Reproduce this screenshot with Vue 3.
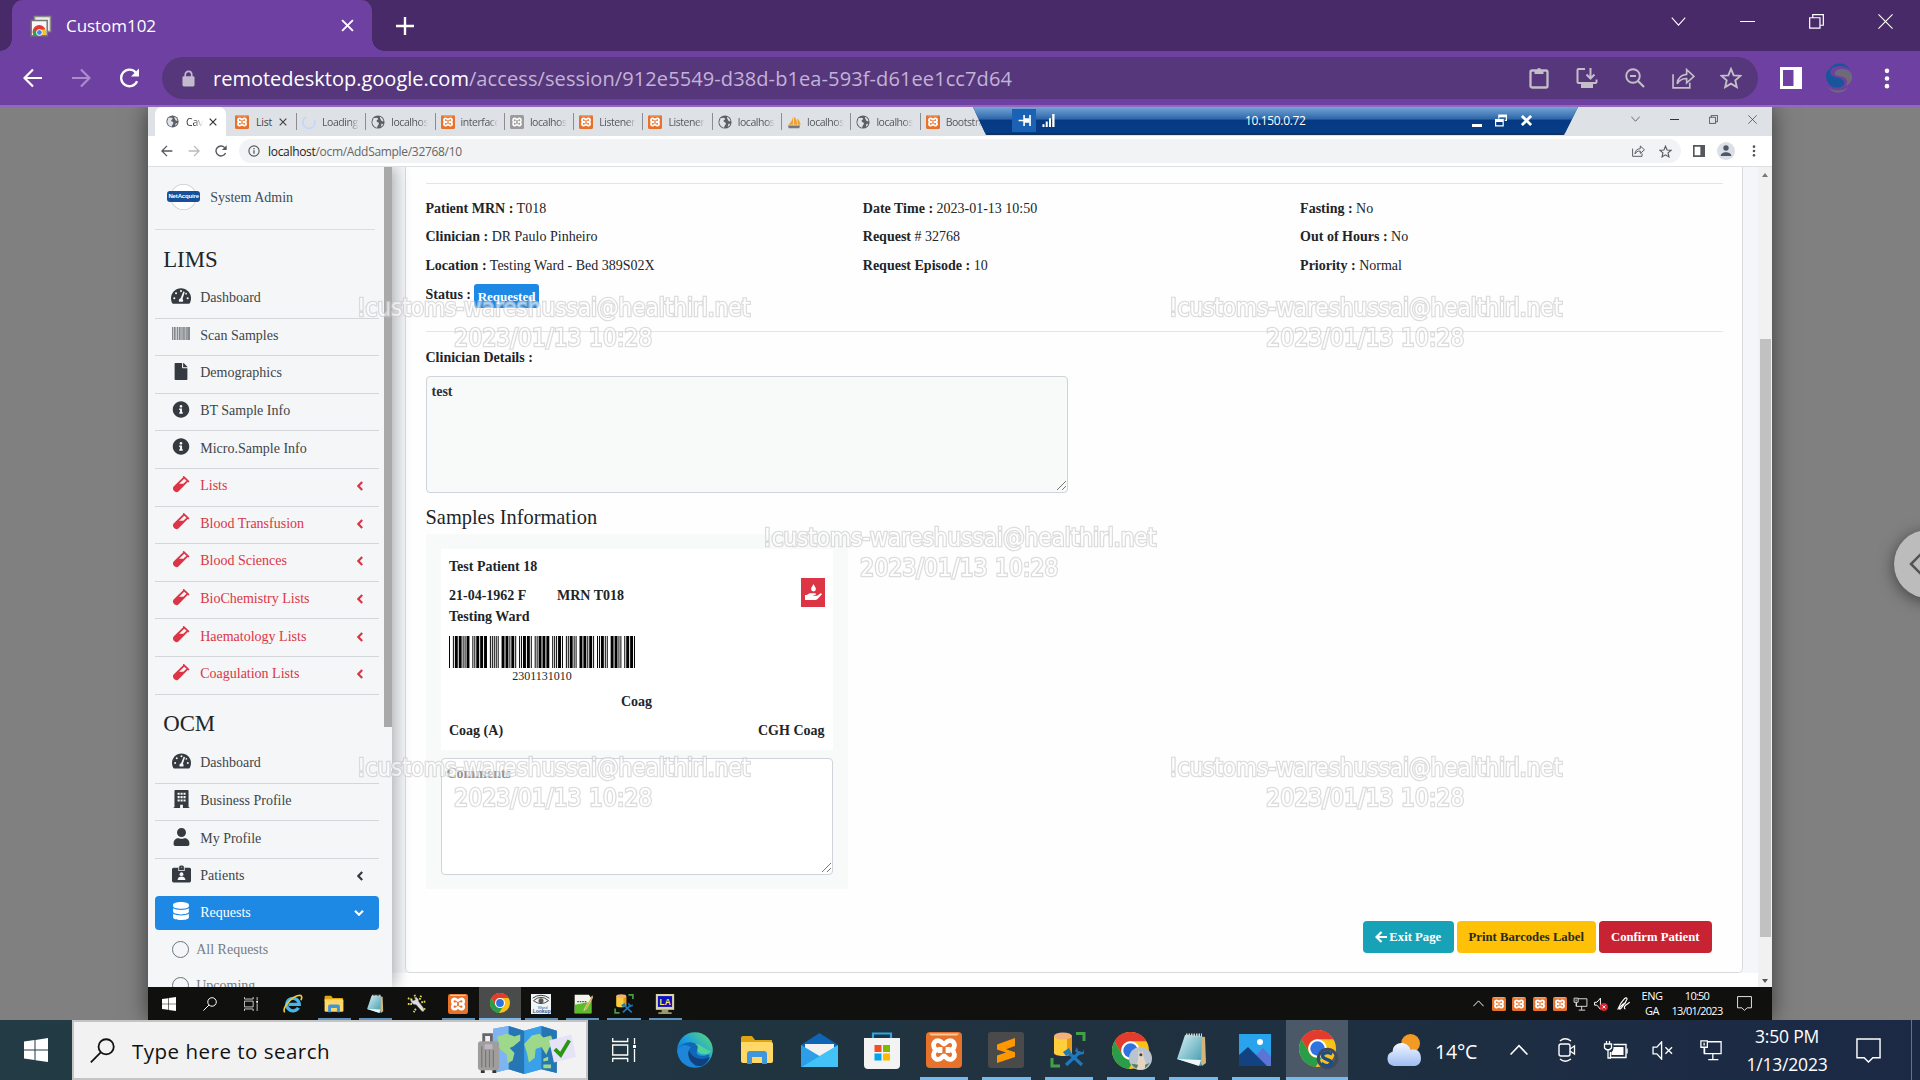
<script setup>
const tabs = [
  { icon: 'spin', text: 'Loading' },
  { icon: 'globe', text: 'localhost' },
  { icon: 'xampp', text: 'interface' },
  { icon: 'xamppgray', text: 'localhost' },
  { icon: 'xampp', text: 'Listener' },
  { icon: 'xampp', text: 'Listener' },
  { icon: 'globe', text: 'localhost' },
  { icon: 'pma', text: 'localhost' },
  { icon: 'globe', text: 'localhost' },
  { icon: 'xampp', text: 'Bootstrap' },
]
const lims = [
  { icon: 'tacho', text: 'Dashboard' },
  { icon: 'scan', text: 'Scan Samples' },
  { icon: 'file', text: 'Demographics' },
  { icon: 'info', text: 'BT Sample Info' },
  { icon: 'info', text: 'Micro.Sample Info' },
  { icon: 'vial', text: 'Lists', red: true },
  { icon: 'vial', text: 'Blood Transfusion', red: true },
  { icon: 'vial', text: 'Blood Sciences', red: true },
  { icon: 'vial', text: 'BioChemistry Lists', red: true },
  { icon: 'vial', text: 'Haematology Lists', red: true },
  { icon: 'vial', text: 'Coagulation Lists', red: true },
]
const ocm = [
  { icon: 'tacho', text: 'Dashboard' },
  { icon: 'building', text: 'Business Profile' },
  { icon: 'user', text: 'My Profile' },
  { icon: 'idbadge', text: 'Patients', arrow: true },
]
const columns = [
  [['Patient MRN :', 'T018'], ['Clinician :', 'DR Paulo Pinheiro'], ['Location :', 'Testing Ward - Bed 389S02X']],
  [['Date Time :', '2023-01-13 10:50'], ['Request', '# 32768'], ['Request Episode :', '10']],
  [['Fasting :', 'No'], ['Out of Hours :', 'No'], ['Priority :', 'Normal']],
]
const marks = [
  { x: 553, y: 294 }, { x: 1365, y: 294 }, { x: 959, y: 524 }, { x: 553, y: 754 }, { x: 1365, y: 754 },
]
const remoteApps = [
  { icon: 'ie' }, { icon: 'folder', open: true }, { icon: 'notepad', open: true }, { icon: 'wrench' },
  { icon: 'xampp', open: true }, { icon: 'chrome', active: true }, { icon: 'eye', open: true },
  { icon: 'npp', open: true }, { icon: 'dbtool', open: true }, { icon: 'la', open: true },
]
const hostApps = [
  { icon: 'edge', w: 36, h: 36 }, { icon: 'folder', w: 34, h: 34 }, { icon: 'mail', w: 37, h: 34 }, { icon: 'store', w: 36, h: 37 },
  { icon: 'xampp', w: 36, h: 36, open: true }, { icon: 'sublime', w: 36, h: 36, open: true },
  { icon: 'dbtool', w: 36, h: 36, open: true }, { icon: 'chrome', w: 37, h: 37, open: true, badge: 'pet' },
  { icon: 'notepad', w: 36, h: 36, open: true }, { icon: 'photos', w: 32, h: 32, open: true },
  { icon: 'chrome', w: 37, h: 37, active: true, badge: 'swirlbadge' },
]

// Code 39: alternating bar and space, w = wide
const code39 = { '*': 'nwnnwnwnn', 0: 'nnnwwnwnn', 1: 'wnnwnnnnw', 2: 'nnwwnnnnw', 3: 'wnwwnnnnn' }
const bars = []
let pos = 0
for (const ch of '*2301131010*') {
  code39[ch].split('').forEach((k, i) => {
    const w = k === 'w' ? 3 : 1
    if (i % 2 === 0) bars.push({ x: pos, w })
    pos += w
  })
  pos += 1
}
</script>

<template>
  <div class="screen">
    <svg width="0" height="0" class="defs">
      <defs>
        <linearGradient id="gEdge" x1="0" y1="1" x2="1" y2="0"><stop offset="0" stop-color="#0c59a4" /><stop offset=".5" stop-color="#1b9de2" /><stop offset="1" stop-color="#5fe06a" /></linearGradient>
        <linearGradient id="gPad" x1="0" y1="0" x2="1" y2="1"><stop offset="0" stop-color="#d9f1f5" /><stop offset="1" stop-color="#3b97ac" /></linearGradient>
        <linearGradient id="gCloud" x1="0" y1="0" x2="0" y2="1"><stop offset="0" stop-color="#f2f6ff" /><stop offset="1" stop-color="#9dbdf3" /></linearGradient>
        <symbol id="back" viewBox="0 0 20 20"><path d="M19 10H2M10 1.500L1.500 10l8.500 8.500" fill="none" stroke="currentColor" stroke-width="2.200" /></symbol>
        <symbol id="fwd" viewBox="0 0 20 20"><path d="M1 10h17M10 1.500l8.500 8.500-8.500 8.500" fill="none" stroke="currentColor" stroke-width="2.200" /></symbol>
        <symbol id="reload" viewBox="0 0 20 20"><path d="M17.600 13.200A8.300 8.300 0 1 1 16.200 4.400" fill="none" stroke="currentColor" stroke-width="2.300" /><path d="M19.500 .5v8h-8z" fill="currentColor" /></symbol>
        <symbol id="x" viewBox="0 0 12 12"><path d="M1 1l10 10M11 1L1 11" fill="none" stroke="currentColor" stroke-width="1.800" /></symbol>
        <symbol id="xthin" viewBox="0 0 16 16"><path d="M.5 .5l15 15M15.500 .5l-15 15" fill="none" stroke="currentColor" stroke-width="1.200" /></symbol>
        <symbol id="vee" viewBox="0 0 16 10"><path d="M.5 .8L8 9 15.500 .8" fill="none" stroke="currentColor" stroke-width="1.200" /></symbol>
        <symbol id="caret" viewBox="0 0 16 10"><path d="M.5 9L8 1.200 15.500 9" fill="none" stroke="currentColor" stroke-width="1.400" /></symbol>
        <symbol id="restore" viewBox="0 0 16 16"><path d="M.7 4h11v11h-11zM4 4V.7h11.300V12H12" fill="none" stroke="currentColor" stroke-width="1.300" /></symbol>
        <symbol id="lock" viewBox="0 0 14 18"><path d="M3.500 8V4.800a3.500 3.500 0 0 1 7 0V8" fill="none" stroke="currentColor" stroke-width="1.800" /><rect x=".5" y="6.500" width="13" height="11" rx="1.500" fill="currentColor" /></symbol>
        <symbol id="clip" viewBox="0 0 20 22"><rect x="1.500" y="3.500" width="17" height="17" rx="1.500" fill="none" stroke="currentColor" stroke-width="2.300" /><path d="M5.500 3h2.500a2 2 0 0 1 4 0h2.500v4h-9z" fill="currentColor" /></symbol>
        <symbol id="install" viewBox="0 0 22 22"><path d="M9 2H2.500a1 1 0 0 0-1 1v12a1 1 0 0 0 1 1h17a1 1 0 0 0 1-1v-2.500" fill="none" stroke="currentColor" stroke-width="2" /><path d="M14.500 1v10M10.500 7.500l4 4 4-4" fill="none" stroke="currentColor" stroke-width="2" /><path d="M5 17h12v4H5z" fill="currentColor" /></symbol>
        <symbol id="zoomout" viewBox="0 0 20 20"><circle cx="8" cy="8" r="6.800" fill="none" stroke="currentColor" stroke-width="1.900" /><path d="M13 13l6 6M5 8h6" stroke="currentColor" stroke-width="2.200" /></symbol>
        <symbol id="share" viewBox="0 0 22 20"><path d="M1 6v13h16v-5" fill="none" stroke="currentColor" stroke-width="1.600" /><path d="M5 15c.5-6 3.500-8.500 9-9V1.500L21 8l-7 6.200V10c-4.500 0-7 1.500-9 5z" fill="none" stroke="currentColor" stroke-width="1.600" /></symbol>
        <symbol id="star" viewBox="0 0 20 20"><path d="M10 1.800l2.400 5.800 6.200.5-4.700 4.100 1.400 6.100-5.300-3.200-5.300 3.200 1.400-6.100L1.400 8.100l6.200-.5z" fill="none" stroke="currentColor" stroke-width="1.700" /></symbol>
        <symbol id="panel" viewBox="0 0 22 22"><path fill-rule="evenodd" d="M0 0h22v22H0zM3 3v16h10.500V3z" fill="currentColor" /></symbol>
        <symbol id="dots" viewBox="0 0 6 22"><circle cx="3" cy="3" r="2.400" fill="currentColor" /><circle cx="3" cy="11" r="2.400" fill="currentColor" /><circle cx="3" cy="19" r="2.400" fill="currentColor" /></symbol>
        <symbol id="swirl" viewBox="0 0 30 30"><path d="M5 7a12 12 0 0 1 21-.5C20 1.500 11 2 5 7zM2 14C1 9 5 6 8 5.500 5 9 6 13 11 14c6 1.500 10 3 9 7-1 3-5 4-9 3.500C6 24 3 20 2 14z" fill="#17569a" /><path d="M28 15c1-6-5-9.500-11-9-5 .5-7 3-6 5.500C12 14 22 12 23 18c.3 2-.5 4-2 5 4-1 6.500-4 7-8zM4 24c6 5 15 4.500 20 0-4 7-15 8-20 0z" fill="#6d6b78" /></symbol>
        <symbol id="swirlbadge" viewBox="0 0 30 30"><circle cx="15" cy="15" r="12" fill="none" stroke="#3f4a5a" stroke-width="4" /><path d="M21 9c-8-4-14 0-12 4s12 3 11 8-9 4-13 0" fill="none" stroke="#1e4d84" stroke-width="4.500" /></symbol>
        <symbol id="pet" viewBox="0 0 30 30"><circle cx="15" cy="15" r="15" fill="#b9c4d0" /><path d="M12 4l3 4 3-3 1 8c2 5 4 9 4 14a15 15 0 0 1-14 1c0-6 3-9 3-14z" fill="#e3d6c4" /><circle cx="15.500" cy="10" r="2" fill="#4d4038" /><path d="M3 22a14 14 0 0 0 7 6l2-5zM27 21l-6 2v5z" fill="#567e4f" /></symbol>
        <symbol id="crd" viewBox="0 0 22 22"><path d="M4.500 1.500h16v15H4.500z" fill="#ececec" stroke="#8b8b8b" stroke-width="1.500" /><path d="M1.200 5.500h16v15.300h-16z" fill="#f7f7f7" stroke="#777" stroke-width="1.500" /><path d="M3 19a6.500 6.500 0 0 1 12.500-4.500l-6 .5z" fill="#e33b2e" /><path d="M3 20a7 7 0 0 1 1.500-5l4 5z" fill="#2a9d4b" /><path d="M11 15h4.700c.5 1.500.5 3.500 0 5h-5z" fill="#fbc116" /><circle cx="9.400" cy="17.500" r="2.900" fill="#4285f4" stroke="#fff" /></symbol>
        <symbol id="globe" viewBox="0 0 16 16"><circle cx="8" cy="8" r="7.500" fill="#5a6066" /><path d="M3 3.500c2 0 4-1 5 .5s-2 1.500-1.500 3S9.500 8 9 10s-2 2.500-2 4.500C4 14 1.500 11 1.500 8zM10.500 2c2 1 3.500 2.500 3.800 5-1.500.5-2.500 0-3-1.500s-1.500-2-.8-3.500zM12 10l2 .3c-.6 1.500-1.500 2.500-3 3z" fill="#dfe2e6" /></symbol>
        <symbol id="xampp" viewBox="0 0 36 36"><rect width="36" height="36" rx="4" fill="#e7722b" /><path d="M3 1.500h30l-2 2H5z" fill="#fbc79c" /><path d="M10 9c5-2 6 3 8 3s3-5 8-3c3.500 2 3 6.500 0 9 3 2.500 3.500 7 0 9-5 2-6-3-8-3s-3 5-8 3c-3.500-2-3-6.500 0-9-3-2.500-3.500-7 0-9zM14 15v6M22 15v6" fill="none" stroke="#fff" stroke-width="4.800" stroke-linejoin="round" /></symbol>
        <symbol id="xamppgray" viewBox="0 0 36 36"><rect width="36" height="36" rx="4" fill="#9b9b9b" /><path d="M10 9c5-2 6 3 8 3s3-5 8-3c3.500 2 3 6.500 0 9 3 2.500 3.500 7 0 9-5 2-6-3-8-3s-3 5-8 3c-3.500-2-3-6.500 0-9-3-2.500-3.500-7 0-9zM14 15v6M22 15v6" fill="none" stroke="#fff" stroke-width="4" /></symbol>
        <symbol id="spin" viewBox="0 0 16 16"><path d="M5 2A7 7 0 1 0 14.500 6" fill="none" stroke="#c3d8f8" stroke-width="2" /></symbol>
        <symbol id="pma" viewBox="0 0 16 16"><path d="M7 1v10H1.500C5 8 6.500 5 7 1zM8 2c3 2.500 3.500 5.500 3.500 9H8zM12 4c2 2 3 4 3.500 7H12z" fill="#f0a030" /><path d="M1 12h14l-1 3H2z" fill="#77777f" /></symbol>
        <symbol id="infoo" viewBox="0 0 16 16"><circle cx="8" cy="8" r="6.800" fill="none" stroke="currentColor" stroke-width="1.500" /><path d="M8 7v4.800M8 4v1.700" stroke="currentColor" stroke-width="1.700" /></symbol>
        <symbol id="pin" viewBox="0 0 14 12"><path d="M0 6h6M6 0v12M12.500 0v12" stroke="currentColor" stroke-width="1.800" /><path d="M6 3.500h6v5H6z" fill="currentColor" /></symbol>
        <symbol id="signal" viewBox="0 0 13 14"><path d="M0 11h2.200v3H0zM3.500 8h2.200v6H3.500zM7 4.500h2.200V14H7zM10.500 0H13v14h-2.500z" fill="currentColor" /></symbol>
        <symbol id="rdprest" viewBox="0 0 13 13"><path fill-rule="evenodd" d="M3.500 0H13v7h-2.500V5.700h1.300V3H4.700v1.500H3.500zM0 5h9.500v8H0zM1.300 8v3.700h6.900V8z" fill="currentColor" /></symbol>
        <symbol id="avatar" viewBox="0 0 18 18"><circle cx="9" cy="9" r="9" fill="#dce0e6" /><circle cx="9" cy="6" r="2.700" fill="#4d5968" /><path d="M3.700 14c0-5 10.600-5 10.600 0z" fill="#4d5968" /></symbol>
        <symbol id="tacho" viewBox="0 0 576 512"><path d="M288 32C129 32 0 161 0 320c0 53 14 102 39 145 6 10 16 15 27 15h444c11 0 21-5 27-15 25-43 39-92 39-145C576 161 447 32 288 32z" fill="currentColor" /><g fill="#f4f6f9"><circle cx="288" cy="115" r="30" /><circle cx="145" cy="175" r="30" /><circle cx="95" cy="320" r="30" /><circle cx="480" cy="320" r="30" /><circle cx="435" cy="190" r="26" /><path d="M355 125l42 14-66 200c18 14 25 40 15 80H230c-15-50 5-85 45-95z" /></g></symbol>
        <symbol id="scan" viewBox="0 0 18 13"><path d="M0 0h18v13H0z" fill="#c9cccf" /><path d="M0 0h1v13H0zM2 0h1.500v13H2zM5 0h1v13H5zM7 0h1.500v13H7zM9.500 0h1v13h-1zM11.200 0h1.500v13h-1.500zM13.700 0h1v13h-1zM15.300 0H18v13h-2.700z" fill="#85898d" /></symbol>
        <symbol id="file" viewBox="0 0 384 512"><path fill="currentColor" d="M224 136V0H24C10.700 0 0 10.700 0 24v464c0 13.300 10.700 24 24 24h336c13.300 0 24-10.700 24-24V160H248c-13.200 0-24-10.800-24-24zm160-14.100v6.100H256V0h6.100c6.400 0 12.500 2.500 17 7l97.900 98c4.500 4.500 7 10.600 7 16.900z" /></symbol>
        <symbol id="info" viewBox="0 0 512 512"><path fill="currentColor" d="M256 8C119.043 8 8 119.083 8 256c0 136.997 111.043 248 248 248s248-111.003 248-248C504 119.083 392.957 8 256 8zm0 110c23.196 0 42 18.804 42 42s-18.804 42-42 42-42-18.804-42-42 18.804-42 42-42zm56 254c0 6.627-5.373 12-12 12h-88c-6.627 0-12-5.373-12-12v-24c0-6.627 5.373-12 12-12h12v-64h-12c-6.627 0-12-5.373-12-12v-24c0-6.627 5.373-12 12-12h64c6.627 0 12 5.373 12 12v100h12c6.627 0 12 5.373 12 12v24z" /></symbol>
        <symbol id="vial" viewBox="0 0 16 16"><path fill-rule="evenodd" d="M9.800.3l1-.3L16 5l-.8 1-.9-.4-8.500 8.800C3 17-1.500 12.500 1.300 9.700L10 1.200zM11 2.600L6.200 7.400h4L13.200 4.500z" fill="currentColor" /></symbol>
        <symbol id="building" viewBox="0 0 448 512"><path fill-rule="evenodd" d="M0 512v-24h24V24Q24 0 48 0h352q24 0 24 24v464h24v24H264v-92h-80v92zM112 76v60h60V76zm84 0v60h60V76zm84 0v60h60V76zM112 172v60h60v-60zm84 0v60h60v-60zm84 0v60h60v-60zM112 268v60h60v-60zm168 0v60h60v-60zm-84 0v60h60v-60z" fill="currentColor" /></symbol>
        <symbol id="user" viewBox="0 0 448 512"><path fill="currentColor" d="M224 256c70.700 0 128-57.300 128-128S294.700 0 224 0 96 57.300 96 128s57.300 128 128 128zm89.600 32h-16.700c-22.200 10.200-46.900 16-72.900 16s-50.600-5.800-72.900-16h-16.700C60.200 288 0 348.200 0 422.400V464c0 26.500 21.500 48 48 48h352c26.500 0 48-21.500 48-48v-41.600c0-74.200-60.200-134.400-134.400-134.400z" /></symbol>
        <symbol id="idbadge" viewBox="0 0 576 512"><path d="M48 64h168V40q0-40 72-40t72 40v24h168q48 0 48 48v352q0 48-48 48H48q-48 0-48-48V112q0-48 48-48z" fill="currentColor" /><path d="M216 64v80h144V64h24v104H192V64z" fill="#f4f6f9" /><circle cx="288" cy="260" r="58" fill="#f4f6f9" /><path d="M170 440c0-140 236-140 236 0z" fill="#f4f6f9" /><circle cx="288" cy="60" r="22" fill="#8e959b" /></symbol>
        <symbol id="database" viewBox="0 0 448 512"><path fill="currentColor" d="M448 73.143v45.714C448 159.143 347.667 192 224 192S0 159.143 0 118.857V73.143C0 32.857 100.333 0 224 0s224 32.857 224 73.143zM448 176v102.857C448 319.143 347.667 352 224 352S0 319.143 0 278.857V176c48.125 33.143 136.208 48.572 224 48.572S399.874 209.143 448 176zm0 160v102.857C448 479.143 347.667 512 224 512S0 479.143 0 438.857V336c48.125 33.143 136.208 48.572 224 48.572S399.874 369.143 448 336z" /></symbol>
        <symbol id="angle" viewBox="0 0 6 10"><path d="M5.200 1L1.300 5l3.900 4" fill="none" stroke="currentColor" stroke-width="2.200" /></symbol>
        <symbol id="angled" viewBox="0 0 10 6"><path d="M1 .8l4 3.900L9 .8" fill="none" stroke="currentColor" stroke-width="2.200" /></symbol>
        <symbol id="drop" viewBox="0 0 17 16"><path d="M8.500 0c1 2.200 2.400 3.200 2.400 5a2.400 2.400 0 0 1-4.800 0c0-1.800 1.400-2.800 2.400-5zM0 11h2c2-2 4-1.700 6-1.700h2c1.300 0 1.200 1.700 0 1.700H8.500v.7h3.700l3-2.300c1.200-.7 2 .5 1.300 1.300L12.500 15c-.6.600-1.500 1-2.500 1H0z" fill="#fff" /></symbol>
        <symbol id="win" viewBox="0 0 24 24"><path d="M0 3.400L10.500 2v9.600H0zM11.500 1.900L24 0v11.600H11.500zM0 12.500h10.500V22L0 20.600zM11.500 12.500H24V24l-12.500-1.800z" fill="#fff" /></symbol>
        <symbol id="search" viewBox="0 0 24 24"><circle cx="15.500" cy="8.500" r="7.300" fill="none" stroke="currentColor" stroke-width="1.700" /><path d="M10.300 13.700L.8 23.300" stroke="currentColor" stroke-width="1.700" /></symbol>
        <symbol id="taskview" viewBox="0 0 24 24"><path d="M.7 0v3.500h15V0M.7 24v-3.500h15V24M.7 7h15v10h-15zM22.500 0v6M22.500 11v13" fill="none" stroke="#fff" stroke-width="1.300" /><path d="M21 7h3v3h-3z" fill="#fff" /></symbol>
        <symbol id="edge" viewBox="0 0 36 36"><circle cx="18" cy="18" r="17.800" fill="url(#gEdge)" /><path d="M.5 20C2 11 12 8 19 12c4 2.500 3 6 .5 8 0 4 6 5 12 2.500 1 0 1.500 1 .5 2.500-7 11-20 13-28 3-2-2-3-5-3.500-8z" fill="#1067b8" /><path d="M14 15c-5 5-2 15 6 20C8 37 0 27 .3 18 4 12 9 12 14 15z" fill="#1d86d8" /><path d="M12 18c-3 8 4 17 13 16 4-2 7-6 8-9-8 4-18 2-21-7z" fill="#123f7d" /><path d="M20 18c2-3 0-5-2-6 7 0 9 6 16 7-2 4-12 5-14-1z" fill="#52d39c" /></symbol>
        <symbol id="folder" viewBox="0 0 34 34"><path d="M1 5q0-2 2-2h9l3 4h17v5H1z" fill="#e0a412" /><path d="M1 9h30q2 0 2 2v17q0 2-2 2H3q-2 0-2-2z" fill="#ffd867" /><path d="M7 31V21q0-3 3-3h14q3 0 3 3v10h-5v-7H12v7z" fill="#3e96dd" /></symbol>
        <symbol id="mail" viewBox="0 0 37 34"><path d="M0 12L18.500 0 37 12v22H0z" fill="#0e64b5" /><path d="M4 11h29v12H4z" fill="#f2f2f2" /><path d="M0 12l18.500 11L0 34z" fill="#2d9ee8" /><path d="M37 12L0 34h37z" fill="#42c2f7" /></symbol>
        <symbol id="store" viewBox="0 0 36 37"><path d="M9 9V1.500h18V9" fill="none" stroke="#29a7ea" stroke-width="2.200" /><path d="M0 6h36v27q0 4-4 4H4q-4 0-4-4z" fill="#f3f3f3" /><path d="M10.500 13h7v7h-7z" fill="#f25022" /><path d="M19 13h7v7h-7z" fill="#7fba00" /><path d="M10.500 21.500h7v7h-7z" fill="#00a4ef" /><path d="M19 21.500h7v7h-7z" fill="#ffb900" /></symbol>
        <symbol id="sublime" viewBox="0 0 36 36"><rect width="36" height="36" rx="3" fill="#4a4a4a" /><path d="M9 12.500L27 6v8l-9 3.200 9 3V25L9 31v-7.500l9-3-9-3z" fill="#ff9800" /></symbol>
        <symbol id="dbtool" viewBox="0 0 36 36"><path d="M4 4v17c0 4 18 4 18 0V4z" fill="#ffce3a" /><path d="M17 4v19c3 0 5-1 5-2V4z" fill="#e79b14" /><ellipse cx="13" cy="4" rx="9" ry="3.500" fill="#f2b27a" /><path d="M26 1.500h8V9M2 26v8h8" fill="none" stroke="#43a047" stroke-width="3" /><path d="M18 20l14 13M30 20L16 33" stroke="#1e78be" stroke-width="3.200" /><path d="M13 20l6-4 2 4-5 4zM27 15l1 4 5 1 1-3v5l-5 1-4-4z" fill="#1e78be" /></symbol>
        <symbol id="chrome" viewBox="0 0 36 36"><circle cx="18" cy="18" r="18" fill="#fbc116" /><path d="M2.400 9A18 18 0 0 1 33.600 9H18a9 9 0 0 0-7.800 13.500z" fill="#e33b2e" /><path d="M2.400 9l7.800 13.500A9 9 0 0 0 18 27h4l-6 8.900A18 18 0 0 1 2.400 9z" fill="#2a9d4b" /><circle cx="18" cy="18" r="9" fill="#fff" /><circle cx="18" cy="18" r="7" fill="#2f73e0" /></symbol>
        <symbol id="notepad" viewBox="0 0 36 36"><path d="M12 3l18 2 1 26-4 3z" fill="#d2b577" /><path d="M10 3l17 1-1 30L2 27z" fill="url(#gPad)" /><path d="M11 3h16" stroke="#d8d8d8" stroke-width="3" stroke-dasharray="1.500 1" /><path d="M2 27l22 7 2-6z" fill="#eef8f8" /></symbol>
        <symbol id="photos" viewBox="0 0 32 32"><path d="M0 0h32v32H0z" fill="#28a3ec" /><path d="M16 32V22l8-8 8 9v9z" fill="#5b74d6" /><path d="M0 21l9-8 19 19H0z" fill="#12427f" /><circle cx="21" cy="8" r="3" fill="#fff" /></symbol>
        <symbol id="ie" viewBox="0 0 24 24"><path d="M18.500 16.500a7.500 7.500 0 1 1 1-4H7" fill="none" stroke="#43b7ea" stroke-width="4" /><path d="M2 22C-1 17 9 3 20 1.500c3 0 3 3 1.500 6" fill="none" stroke="#f2c834" stroke-width="2" /></symbol>
        <symbol id="wrench" viewBox="0 0 24 24"><path d="M1 5l5 2M9 1l2 5M17 2l-2 5M1 12l5 0M22 9l-5 1M22 18l-3 0M8 22l3-5" stroke="#e8d93a" stroke-width="2.200" stroke-dasharray="2 1" /><path d="M4 6l2-1 1 3 3-1-1-3q5 0 5 5l6 8q2 4-2 4l-7-8q-6 0-7-7z" fill="#dcdcdc" stroke="#555" stroke-width=".6" /></symbol>
        <symbol id="eye" viewBox="0 0 24 24"><path d="M0 0h24v24H0z" fill="#f2f5f7" /><path d="M3 8q9-8 18 0-9 7-18 0zM2 5q10-7 20 0" fill="none" stroke="#444" stroke-width="1.200" /><circle cx="12" cy="8" r="3" fill="#555" /><text x="2" y="23" font-size="6" font-family="Liberation Sans" font-weight="700" fill="#2b5c9e">Lookup</text><text x="8" y="17.500" font-size="5" font-family="Liberation Sans" fill="#2b5c9e">Word</text></symbol>
        <symbol id="npp" viewBox="0 0 24 24"><path d="M2 1h17l3 4v18H2z" fill="#f3f5ec" /><path d="M2 13l20-4v14H2z" fill="#5dbb2c" /><path d="M5 9h11" stroke="#555" stroke-width="1.500" stroke-dasharray="2 1" /><path d="M23 2l-9 15-1 3 3-2 8-14z" fill="#e4a032" stroke="#fff" stroke-width=".5" /></symbol>
        <symbol id="la" viewBox="0 0 24 24"><path d="M1 0h22v19H1z" fill="#d9d6a2" /><path d="M3.500 2.500h17v13h-17z" fill="#100fc2" /><path d="M8 19h8v3H8zM4 22h16v2H4z" fill="#9b9870" /><text x="5.500" y="13" font-size="10" font-weight="700" font-family="Liberation Sans" fill="#ffe75c">LA</text></symbol>
        <symbol id="monitor" viewBox="0 0 24 24"><path d="M8 3h15v13H5v-6M14 16v6M9 22.500h11M1 2h7v7H1zM4.500 4v3M4.500 9v7" fill="none" stroke="#fff" stroke-width="1.400" /></symbol>
        <symbol id="mute" viewBox="0 0 24 20"><path d="M1 6.500h4l5-5.500v18l-5-5.500H1zM14 6.500l7 7M21 6.500l-7 7" fill="none" stroke="#fff" stroke-width="1.400" /></symbol>
        <symbol id="mutered" viewBox="0 0 24 24"><path d="M1 9h4l6-7v19l-6-7H1z" fill="none" stroke="#fff" stroke-width="1.700" /><circle cx="17" cy="17" r="6.800" fill="#d3222d" /><path d="M14.500 14.500l5 5M19.500 14.500l-5 5" stroke="#fff" stroke-width="1.700" /></symbol>
        <symbol id="pen" viewBox="0 0 20 20"><path d="M1 18c2-5 6-12 10-16 2-1.500 4-.5 3 2-2 4-5 8-8 12-2 2.500-3 1-2-1 2-3 7-7 9-7M12 17c-2 0-2-3 0-5s5-3 6-5" fill="none" stroke="#fff" stroke-width="1.700" /></symbol>
        <symbol id="notif" viewBox="0 0 26 26"><path d="M1 1h24v19.500h-7.500L13 25l-4.500-4.500H1z" fill="none" stroke="#fff" stroke-width="1.500" /></symbol>
        <symbol id="meet" viewBox="0 0 20 24"><rect x="2" y="6" width="11" height="12" rx="2" fill="none" stroke="#fff" stroke-width="1.400" /><path d="M13 11l4.500-3v8L13 13M3 3q5-4.500 11 0M3 21q5 4.500 11 0" fill="none" stroke="#fff" stroke-width="1.300" /></symbol>
        <symbol id="battery" viewBox="0 0 24 20"><path d="M10 4.500h12.500v13H7V12" fill="none" stroke="#fff" stroke-width="1.400" /><path d="M10 7h10v8H8v-3q2-1 2-5zM23 8.500h1.200v5H23z" fill="#fff" /><path d="M1 4h7v4q-3.500 4-7 0zM3 1v3M6 1v3M4.500 9v9h3" fill="none" stroke="#fff" stroke-width="1.300" /></symbol>
        <symbol id="weather" viewBox="0 0 38 34"><circle cx="26" cy="10" r="10" fill="#f39a24" /><path d="M8 34a8 8 0 0 1-1-15.500C7 8 23 6 26 17c8-2 11 3 11 9 0 5-3 8-8 8z" fill="url(#gCloud)" /></symbol>
        <symbol id="travel" viewBox="0 0 102 52"><path d="M16 4l16-3 16 5 18-5 16 5v44l-16-4-18 5-16-5-16 4z" fill="#45a0e0" /><path d="M16 4l16-3v45l-16 4z" fill="#7fb4f2" /><path d="M48 6l18-5v45l-18 5z" fill="#3aa0e8" /><path d="M66 1l16 5v44l-16-4zM32 1l16 5v45l-16-5z" fill="#2776b4" /><path d="M20 12l10-3 8 3 6-2 0 6-7 6-4 2 5 5-2 8-5 3-1-9-8-7zM48 20l8-9 8-2 4 4 8-2 3 8-5 5-3 7-5-8-6 2-1 9-6 5-2-10zM68 35l5-2v4l-5 1zM68 41h8v4h-8z" fill="#9ed98b" /><path d="M6 19V10h8v9" fill="none" stroke="#67666e" stroke-width="3" /><rect x="0" y="17" width="22" height="30" rx="3" fill="#a09d9d" /><path d="M4 22v22M8 26v18M12 26v18M16 26v18" stroke="#77757a" stroke-width="1.200" /><path d="M7 20h8v5H7z" fill="#bfb6c2" /><path d="M3 47h4v3H3zM15 47h4v3h-4z" fill="#333" /><path d="M74 16l23-6 5 23-23 6z" fill="#e6e2f7" /><path d="M80 25l6 6 9-15" fill="none" stroke="#2a9712" stroke-width="4" /></symbol>
      </defs>
    </svg>

    <!-- host browser -->
    <header class="strip">
      <div class="tab">
        <svg width="22" height="22"><use href="#crd" /></svg>
        <span class="title">Custom102</span>
        <svg width="13" height="13"><use href="#x" /></svg>
      </div>
      <svg class="plus" width="18" height="18" viewBox="0 0 18 18"><path d="M9 0v18M0 9h18" stroke="#fff" stroke-width="2.400" /></svg>
      <div class="winctl">
        <span><svg width="15" height="9"><use href="#vee" /></svg></span>
        <span><i class="dash" /></span>
        <span><svg width="15" height="15"><use href="#restore" /></svg></span>
        <span><svg width="15" height="15"><use href="#xthin" /></svg></span>
      </div>
    </header>
    <div class="toolbar">
      <div class="nav">
        <span><svg width="20" height="20"><use href="#back" /></svg></span>
        <span class="dim"><svg width="20" height="20"><use href="#fwd" /></svg></span>
        <span><svg width="21" height="20"><use href="#reload" /></svg></span>
      </div>
      <div class="omni">
        <svg class="lk" width="13" height="17"><use href="#lock" /></svg>
        <span class="url"><b>remotedesktop.google.com</b>/access/session/912e5549-d38d-b1ea-593f-d61ee1cc7d64</span>
        <div class="acts">
          <span><svg width="20" height="22"><use href="#clip" /></svg></span>
          <span><svg width="22" height="22"><use href="#install" /></svg></span>
          <span><svg width="20" height="20"><use href="#zoomout" /></svg></span>
          <span><svg width="23" height="21"><use href="#share" /></svg></span>
          <span><svg width="22" height="22"><use href="#star" /></svg></span>
        </div>
      </div>
      <div class="ext">
        <span><svg width="22" height="22"><use href="#panel" /></svg></span>
        <span><svg width="30" height="30"><use href="#swirl" /></svg></span>
        <span><svg width="6" height="21"><use href="#dots" /></svg></span>
      </div>
    </div>

    <!-- remote session -->
    <div class="session">
      <div class="remote">
        <div class="rstrip">
          <div class="ract"><svg width="13" height="13"><use href="#globe" /></svg><span class="t1">Cav</span><svg width="8" height="8"><use href="#x" /></svg></div>
          <div class="rsec"><svg width="14" height="14"><use href="#xampp" /></svg><span class="t1">List</span><svg width="8" height="8"><use href="#x" /></svg></div>
          <div v-for="(t, i) in tabs" :key="i" class="rtab"><svg width="14" height="14"><use :href="'#' + t.icon" /></svg><span>{{ t.text }}</span></div>
          <div class="rctl">
            <span><svg width="9" height="6"><use href="#vee" /></svg></span>
            <span><i class="dash" /></span>
            <span><svg width="9" height="9"><use href="#restore" /></svg></span>
            <span><svg width="9" height="9"><use href="#xthin" /></svg></span>
          </div>
          <div class="rdp">
            <div class="rdpin">
              <span class="pinb"><svg width="14" height="11"><use href="#pin" /></svg></span>
              <svg width="13" height="13"><use href="#signal" /></svg>
              <span class="ip">10.150.0.72</span>
              <i class="min" />
              <svg class="rr" width="12" height="13"><use href="#rdprest" /></svg>
              <svg class="rx" width="11" height="11" viewBox="0 0 12 12"><path d="M1 1l10 10M11 1L1 11" stroke="#fff" stroke-width="3" /></svg>
            </div>
          </div>
        </div>
        <div class="rbar">
          <div class="rnav">
            <span><svg width="12" height="12"><use href="#back" /></svg></span>
            <span class="dim"><svg width="12" height="12"><use href="#fwd" /></svg></span>
            <span><svg width="12" height="12"><use href="#reload" /></svg></span>
          </div>
          <div class="romni">
            <svg width="12" height="12"><use href="#infoo" /></svg>
            <span class="rurl"><b>localhost</b>/ocm/AddSample/32768/10</span>
            <svg class="sh" width="13" height="12"><use href="#share" /></svg>
            <svg width="13" height="13"><use href="#star" /></svg>
          </div>
          <svg class="pn" width="12" height="12"><use href="#panel" /></svg>
          <svg class="av" width="18" height="18"><use href="#avatar" /></svg>
          <svg width="4" height="12"><use href="#dots" /></svg>
        </div>

        <div class="page">
          <aside class="side">
            <div class="menu">
              <div class="brand">
                <div class="logo"><span>NetAcquire</span></div>
                <span>System Admin</span>
              </div>
              <h2>LIMS</h2>
              <div v-for="m in lims" :key="m.text" class="item" :class="{ red: m.red }">
                <span class="ic"><svg :width="m.icon === 'tacho' ? 20 : 18" :height="m.icon === 'scan' ? 13 : m.icon === 'tacho' ? 18 : 17"><use :href="'#' + m.icon" /></svg></span>
                <span class="tx">{{ m.text }}</span>
                <svg v-if="m.red" class="ar" width="6" height="10"><use href="#angle" /></svg>
              </div>
              <h2 class="second">OCM</h2>
              <div v-for="m in ocm" :key="m.text" class="item" :class="{ last: m.arrow }">
                <span class="ic"><svg width="19" height="18"><use :href="'#' + m.icon" /></svg></span>
                <span class="tx">{{ m.text }}</span>
                <svg v-if="m.arrow" class="ar" width="6" height="10"><use href="#angle" /></svg>
              </div>
              <div class="item current">
                <span class="ic"><svg width="18" height="18"><use href="#database" /></svg></span>
                <span class="tx">Requests</span>
                <svg class="ar" width="10" height="6"><use href="#angled" /></svg>
              </div>
              <div class="sub"><i /><span>All Requests</span></div>
              <div class="sub"><i /><span>Upcoming</span></div>
            </div>
            <div class="thumb" />
          </aside>

          <main class="main">
            <div class="card">
              <div class="info">
                <div v-for="(c, i) in columns" :key="i" class="col">
                  <div v-for="r in c" :key="r[0]"><b>{{ r[0] }}</b> {{ r[1] }}</div>
                  <div v-if="i === 0" class="status"><b>Status :</b> <span class="badge">Requested</span></div>
                </div>
              </div>
              <div class="lbl">Clinician Details :</div>
              <div class="area big">test<svg width="9" height="9" viewBox="0 0 9 9"><path d="M0 9L9 0M5 9l4-4" stroke="#777" /></svg></div>
              <h3>Samples Information</h3>
              <div class="sample">
                <div class="label">
                  <div class="l1">Test Patient 18</div>
                  <div class="l2"><span class="dob">21-04-1962 F</span><span>MRN T018</span><span class="redb"><svg width="17" height="16"><use href="#drop" /></svg></span></div>
                  <div class="l3">Testing Ward</div>
                  <div class="code">
                    <svg width="186" height="32" viewBox="0 0 191 32" preserveAspectRatio="none"><rect v-for="(b, i) in bars" :key="i" :x="b.x" y="0" :width="b.w" height="32" fill="#000" /></svg>
                    <span>2301131010</span>
                  </div>
                  <div class="l4">Coag</div>
                  <div class="l5"><span>Coag (A)</span><span>CGH Coag</span></div>
                </div>
                <div class="area com">Comments<svg width="9" height="9" viewBox="0 0 9 9"><path d="M0 9L9 0M5 9l4-4" stroke="#777" /></svg></div>
              </div>
              <div class="btns">
                <span class="b1"><svg width="12" height="12" viewBox="0 0 12 12"><path d="M12 6H2M6.500 1L1.500 6l5 5" fill="none" stroke="#fff" stroke-width="2.200" /></svg>Exit Page</span>
                <span class="b2">Print Barcodes Label</span>
                <span class="b3">Confirm Patient</span>
              </div>
            </div>
          </main>
          <div class="scroll">
            <svg width="6" height="4" viewBox="0 0 6 4"><path d="M0 4l3-4 3 4z" fill="#777" /></svg>
            <i />
            <svg width="6" height="4" viewBox="0 0 6 4"><path d="M0 0l3 4 3-4z" fill="#555" /></svg>
          </div>
        </div>

        <footer class="rtask">
          <span class="cell"><svg width="14" height="14"><use href="#win" /></svg></span>
          <span class="cell"><svg width="14" height="14" class="w"><use href="#search" /></svg></span>
          <span class="cell"><svg width="14" height="14"><use href="#taskview" /></svg></span>
          <span v-for="a in remoteApps" :key="a.icon" class="cell app" :class="{ open: a.open, active: a.active }"><svg width="20" height="20"><use :href="'#' + a.icon" /></svg></span>
          <div class="rtray">
            <svg width="11" height="7" class="w"><use href="#caret" /></svg>
            <svg v-for="n in 4" :key="n" class="xa" width="14" height="14"><use href="#xampp" /></svg>
            <svg class="xb" width="15" height="14"><use href="#monitor" /></svg>
            <svg class="xb" width="14" height="14"><use href="#mutered" /></svg>
            <svg class="xc" width="14" height="14"><use href="#pen" /></svg>
            <div class="two eng"><span>ENG</span><span>GA</span></div>
            <div class="two dt"><span>10:50</span><span>13/01/2023</span></div>
            <svg width="15" height="15"><use href="#notif" /></svg>
          </div>
        </footer>
      </div>
      <div class="knob"><svg width="14" height="22" viewBox="0 0 14 22"><path d="M12 1L2 11l10 10" fill="none" stroke="#555" stroke-width="2.600" /></svg></div>
    </div>

    <div v-for="(m, i) in marks" :key="'m' + i" class="mark" :style="{ left: m.x + 'px', top: m.y + 'px' }">
      <div class="m1">!customs-wareshussai@healthirl.net</div><div class="m2">2023/01/13 10:28</div>
    </div>

    <!-- host taskbar -->
    <footer class="task">
      <span class="start"><svg width="24" height="24"><use href="#win" /></svg></span>
      <div class="find">
        <svg width="25" height="25"><use href="#search" /></svg>
        <span>Type here to search</span>
        <svg width="102" height="50" class="tr"><use href="#travel" /></svg>
      </div>
      <span class="tv"><svg width="24" height="24"><use href="#taskview" /></svg></span>
      <span v-for="(a, i) in hostApps" :key="i" class="happ" :class="{ open: a.open, active: a.active }">
        <svg :width="a.w" :height="a.h"><use :href="'#' + a.icon" /></svg>
        <svg v-if="a.badge" class="bdg" width="23" height="23"><use :href="'#' + a.badge" /></svg>
      </span>
      <div class="tray">
        <svg width="38" height="32" class="wx"><use href="#weather" /></svg>
        <span class="deg">14°C</span>
        <span class="tc w"><svg width="18" height="12"><use href="#caret" /></svg></span>
        <span class="tc"><svg width="20" height="24"><use href="#meet" /></svg></span>
        <span class="tc"><svg width="25" height="20"><use href="#battery" /></svg></span>
        <span class="tc"><svg width="23" height="19"><use href="#mute" /></svg></span>
        <span class="tc"><svg width="24" height="22"><use href="#monitor" /></svg></span>
        <div class="clock"><span>3:50 PM</span><span>1/13/2023</span></div>
        <svg width="25" height="25" class="nt"><use href="#notif" /></svg>
        <i class="peek" />
      </div>
    </footer>
  </div>
</template>

<style>
body { margin: 0; overflow: hidden; }
</style>

<style scoped>
* { box-sizing: border-box; }
svg { display: block; flex: none; }
.defs { position: absolute; }
.screen { width: 1920px; height: 1080px; overflow: hidden; display: flex; flex-direction: column; position: relative; font-family: "Open Sans", sans-serif; background: #808080; white-space: nowrap; }
.strip { height: 51px; background: #472a67; display: flex; flex: none; color: #fff; padding-left: 12px; }
.tab { position: relative; width: 360px; height: 51px; background: #6e40a1; border-radius: 11px 11px 0 0; display: flex; align-items: center; padding: 0 18px 0 18px; }
.tab::before, .tab::after { content: ""; position: absolute; bottom: 0; width: 12px; height: 12px; }
.tab::before { left: -12px; background: radial-gradient(circle at 0 0, transparent 11.500px, #6e40a1 12px); }
.tab::after { right: -12px; background: radial-gradient(circle at 100% 0, transparent 11.500px, #6e40a1 12px); }
.title { font-size: 17px; margin-left: 14px; flex: 1; letter-spacing: -.05px; }
.plus { margin: 17px 0 0 24px; }
.winctl { margin-left: auto; display: flex; height: 43px; }
.winctl span { width: 69px; display: flex; align-items: center; justify-content: center; }
.dash { width: 15px; height: 1.500px; background: currentColor; }
.toolbar { height: 56px; flex: none; background: #6e40a1; border-bottom: 2px solid #9169bb; display: flex; color: #fff; padding-top: 6px; }
.nav { display: flex; width: 162px; padding-left: 9px; height: 42px; }
.nav span { width: 48px; display: flex; align-items: center; justify-content: center; }
.nav .dim { color: #ab8dcb; }
.omni { width: 1596px; height: 42px; border-radius: 21px; background: #56377b; display: flex; align-items: center; padding-left: 20px; color: #c3bacd; }
.url { margin-left: 18px; font-size: 20px; letter-spacing: .1px; color: #c3b3d6; line-height: 42px; padding-top: 1px; }
.url b { font-weight: 400; color: #fff; letter-spacing: 0; }
.acts { margin-left: auto; display: flex; padding-right: 3px; color: #c3bec8; }
.acts span { width: 48px; display: flex; justify-content: center; align-items: center; }
.ext { display: flex; height: 42px; padding-left: 9px; }
.ext span { width: 48px; display: flex; align-items: center; justify-content: center; }
.session { height: 913px; flex: none; background: #808080; display: flex; padding-left: 148px; position: relative; overflow: hidden; }
.remote { width: 1624px; height: 913px; display: flex; flex-direction: column; background: #fff; box-shadow: 0 0 22px rgba(0,0,0,.55); overflow: hidden; }
.rstrip { height: 29px; background: #dee1e6; display: flex; position: relative; flex: none; padding-left: 7px; font-size: 11px; color: #55595e; }
.ract { width: 71px; background: #fff; border-radius: 7px 7px 0 0; display: flex; align-items: center; padding-left: 11px; color: #333; }
.rsec { width: 70px; display: flex; align-items: center; padding-left: 9px; color: #444; }
.t1 { width: 17px; overflow: hidden; margin: 0 6px 0 7px; font-size: 10.500px; letter-spacing: -.2px; }
.ract .t1 { margin-left: 7px; width: 17px; margin-right: 6px; -webkit-mask-image: linear-gradient(90deg, #000 50%, transparent); mask-image: linear-gradient(90deg, #000 50%, transparent); }
.rtab { width: 69.300px; display: flex; align-items: center; padding-left: 6px; position: relative; }
.rtab::before { content: ""; position: absolute; left: 0; top: 6px; height: 17px; width: 1px; background: #8a8d92; }
.rtab span { margin-left: 6px; width: 37px; overflow: hidden; font-size: 10.500px; letter-spacing: -.45px; -webkit-mask-image: linear-gradient(90deg, #000 75%, transparent); mask-image: linear-gradient(90deg, #000 75%, transparent); }
.rctl { margin-left: auto; display: flex; color: #333; height: 24px; }
.rctl span { width: 38.900px; display: flex; align-items: center; justify-content: center; }
.rctl .dash { width: 9px; height: 1px; }
.rdp { position: absolute; left: 825px; top: 0; width: 605px; height: 28px; background: #16325c; clip-path: polygon(0 0, 100% 0, 591px 100%, 13px 100%); }
.rdpin { height: 26px; background: linear-gradient(#76a5d6, #2f69ab 45%, #053a82 52%, #053d87); display: flex; align-items: center; padding-left: 39px; color: #fff; }
.pinb { width: 24px; height: 23px; background: #1c62b4; display: flex; align-items: center; justify-content: center; margin-right: 6px; }
.pinb svg { margin-left: 2px; }
.ip { margin-left: 190px; font-size: 12px; letter-spacing: -.35px; width: 64px; }
.min { width: 10px; height: 3px; background: #fff; margin: 10px 0 0 163px; }
.rr { margin-left: 13px; } .rx { margin-left: 14px; }
.rbar { height: 31px; border-bottom: 1px solid #dcdee1; display: flex; align-items: center; flex: none; color: #54585d; }
.rnav { display: flex; width: 91px; padding-left: 5px; }
.rnav span { width: 27.400px; display: flex; justify-content: center; }
.dim { color: #b9bbbe; }
.romni { width: 1442px; height: 24px; border-radius: 12px; background: #f1f3f4; display: flex; align-items: center; padding: 0 9px; }
.rurl { font-size: 12px; margin-left: 8px; letter-spacing: -.31px; color: #666; }
.rurl b { font-weight: 400; color: #222; }
.sh { margin-left: auto; margin-right: 14px; }
.pn { margin-left: 12px; } .av { margin: 0 17px 0 12px; }
.page { height: 820px; display: flex; flex: none; font-family: "Liberation Serif", serif; color: #212529; font-size: 14px; overflow: hidden; }
.side { width: 244px; background: #f4f6f8; display: flex; z-index: 1; box-shadow: 4px 0 14px rgba(0,0,0,.28); flex: none; }
.thumb { width: 8px; height: 560px; background: #a9a9a9; }
.menu { width: 236px; padding: 0 4px 0 7.200px; }
.brand { width: 220px; height: 63px; border-bottom: 1px solid #d9dce0; display: flex; align-items: center; padding: 0 0 1px 12px; color: #454b50; }
.logo { width: 33px; height: 26px; display: flex; align-items: center; justify-content: center; background: radial-gradient(circle, #fff 12px, #d5d8dc 12.500px 13px, transparent 13.500px); margin: -2px 10px 0 0; }
.logo span { width: 33px; height: 11px; border-radius: 3px; background: #14509c; color: #fff; font: bold 6px/11px "Liberation Sans", sans-serif; text-align: center; letter-spacing: -.15px; }
h2 { font-weight: 400; font-size: 22.800px; line-height: 28px; margin: 16px 0 0 8px; }
.item { height: 37.600px; border-bottom: 1px solid #d4d7da; display: flex; align-items: center; padding: 0 16px 3px 16px; color: #3f4549; width: 224px; }
h2 + .item { margin-top: 7px; }
.ic { width: 20px; display: flex; justify-content: center; margin-right: 9px; color: #343a40; }
.ic svg { margin-top: -3px; }
.tx { padding-top: 1px; }
.ar { margin-left: auto; color: #343a40; margin-top: 1px; }
.red, .red .ic, .red .ar { color: #dc3545; }
.second { margin-top: 15px; }
.second + .item { margin-top: 8.500px; }
.item.last { border-color: transparent; }
.item.current { height: 33.600px; background: #1e88e5; border: 0; border-radius: 4px; color: #fff; padding-bottom: 1px; padding-right: 15px; }
.item.current .ic, .item.current .ar { color: #fff; }
.sub { height: 37px; display: flex; align-items: center; padding-left: 17px; color: #777c80; }
.current + .sub { padding-top: 2px; }
.sub i { width: 17px; height: 17px; border: 1.500px solid #6c757d; border-radius: 50%; margin-right: 7px; }
.main { width: 1366px; background: linear-gradient(#f4f6f9 806px, #fff 806px); padding: 0 15px 14px 13px; flex: none; }
.card { height: 806px; background: #fefefe; border: 1px solid #d8dadd; border-top: 0; border-radius: 0 0 5px 5px; padding: 16px 19px 0 19.500px; }
.info { height: 149px; border-top: 1px solid #e4e5e7; border-bottom: 1px solid #e4e5e7; display: flex; padding-top: 10.500px; }
.col { width: 437.300px; flex: none; line-height: 28.700px; }
.col:last-child { width: 420px; }
.status { display: flex; align-items: center; gap: 3px; }
.badge { background: #1e88e5; color: #fff; font-weight: 700; font-size: 13px; height: 24px; line-height: 26px; width: 65px; text-align: center; border-radius: 3px; margin-top: 3px; }
.lbl { font-weight: 700; height: 44px; line-height: 51px; }
.area { border: 1px solid #ced4da; border-radius: 4px; position: relative; font-weight: 700; padding: 7px 5px; line-height: 16px; color: #2a3340; }
.area svg { position: absolute; right: 1px; bottom: 2px; }
.big { width: 642px; height: 117px; background: #f8f9f9; }
h3 { font-weight: 400; font-size: 20.400px; line-height: 26px; margin: 11px 0 4px; }
.sample { width: 422px; height: 355px; background: #f8f9f9; padding: 15px; }
.label { height: 201px; background: #fff; padding: 8px 8px 0 8.500px; font-weight: 700; }
.l1 { line-height: 20px; height: 21px; }
.l2 { display: flex; align-items: center; height: 36px; }
.dob { width: 108px; }
.redb { margin-left: auto; width: 24px; height: 29px; background: #dc3545; display: flex; align-items: center; justify-content: center; margin-top: -8px; margin-right: -.5px; }
.l3 { line-height: 16px; height: 22px; margin-top: -6px; padding-top: 1px; }
.code { width: 186px; display: flex; flex-direction: column; align-items: center; font-weight: 400; font-size: 12px; line-height: 17px; margin-top: 6px; }
.l4 { padding-left: 172px; line-height: 16px; margin-top: 9px; }
.l5 { display: flex; justify-content: space-between; line-height: 16px; margin-top: 13px; }
.com { background: #fff; height: 117px; margin-top: 8px; color: #8d9296; }
.btns { display: flex; justify-content: flex-end; gap: 3.500px; margin-top: 32px; padding-right: 11.500px; font-weight: 700; font-size: 12.700px; }
.btns span { height: 32px; border-radius: 4px; display: flex; align-items: center; justify-content: center; color: #fff; }
.b1 { width: 90.500px; background: #17a2b8; gap: 2px; }
.btns .b2 { width: 138.500px; background: #ffc107; color: #2b2b1e; }
.b3 { width: 112.500px; background: #c82333; }
.scroll { width: 14px; background: #f1f1f1; display: flex; flex-direction: column; align-items: center; padding: 6px 0 4px; }
.scroll i { width: 11px; height: 598px; background: #c1c1c1; margin: 162px 0 auto; }
.rtask { height: 33px; background: #10100f; display: flex; flex: none; }
.cell { width: 41.400px; display: flex; align-items: center; justify-content: center; color: #fff; position: relative; }
.cell.app.open::after { content: ""; position: absolute; left: 4px; right: 4px; bottom: 0; height: 2px; background: #5f93bd; }
.cell.active { background: #4a4b4b; border-bottom: 2px solid #76b9ed; }
.rtray { margin-left: auto; display: flex; align-items: center; color: #fff; padding-right: 20px; font-size: 11px; letter-spacing: -.5px; }
.xa { margin-left: 6.300px; } .rtray .w + .xa { margin-left: 8px; }
.xb { margin-left: 6px; } .xc { margin-left: 9px; }
.two { display: flex; flex-direction: column; align-items: center; line-height: 14.500px; }
.eng { width: 24px; margin-left: 9px; } .dt { width: 56px; margin: 0 12px 0 5px; letter-spacing: -.75px; }
.knob { position: absolute; left: 1894px; top: 423px; width: 68px; height: 68px; border-radius: 50%; background: #bcbcbc; box-shadow: 0 3px 16px rgba(0,0,0,.5); display: flex; align-items: center; padding-left: 15px; }
.mark { position: absolute; width: 420px; margin-left: -209.500px; font-family: "DejaVu Sans Condensed", "DejaVu Sans", sans-serif; color: #fff; -webkit-text-stroke: 2.600px #c9c9cb; paint-order: stroke fill; opacity: .62; z-index: 3; line-height: 29.500px; display: flex; flex-direction: column; align-items: center; }
.m1 { font-size: 24px; letter-spacing: 0; }
.m2 { font-size: 24px; letter-spacing: .3px; }
.task { height: 60px; flex: none; display: flex; background: linear-gradient(90deg, #223b45, #20323f 55%, #1b2945); color: #fff; }
.start { width: 72px; display: flex; align-items: center; justify-content: center; }
.find { width: 516px; background: #f2f2f2; border: 2px solid #c4c4c4; display: flex; align-items: center; padding-left: 16px; color: #111; font-size: 20.500px; }
.find span { margin-left: 17px; letter-spacing: .5px; padding-top: 2px; }
.tr { margin-left: auto; margin-right: 8px; }
.tv { width: 75px; display: flex; align-items: center; justify-content: center; padding-right: 3px; }
.happ { width: 62.300px; display: flex; align-items: center; justify-content: center; position: relative; padding-left: 1px; }
.open::after { content: ""; position: absolute; left: 8px; right: 6px; bottom: 0; height: 3px; background: #76b9ed; }
.happ.active { background: #4a5867; border-bottom: 3px solid #76b9ed; }
.bdg { position: absolute; left: 30px; top: 27px; }
.tray { margin-left: auto; display: flex; align-items: center; width: 535px; }
.deg { font-size: 19.500px; margin-left: 12px; width: 60px; letter-spacing: -.2px; padding-top: 2px; }
.tc { width: 48px; display: flex; justify-content: center; }
.clock { width: 104px; display: flex; flex-direction: column; align-items: center; font-size: 17.500px; line-height: 28.500px; letter-spacing: -.2px; }
.nt { margin-left: 17px; }
.peek { width: 1px; height: 60px; background: #67718a; margin-left: 30px; }
</style>
